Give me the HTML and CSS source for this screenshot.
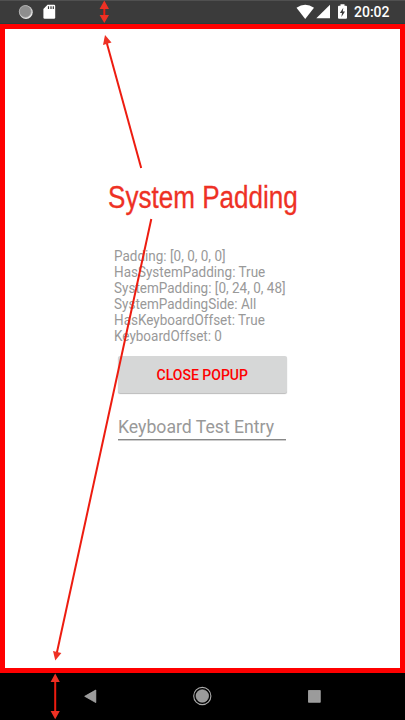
FILE: index.html
```
<!DOCTYPE html>
<html lang="en">
<head>
<meta charset="utf-8">
<title>System Padding</title>
<link rel="stylesheet" href="styles.css">
</head>
<body>
<div class="phone">
  <header class="status">
    <svg class="status-left" width="60" height="24" viewBox="0 0 60 24">
      <circle cx="26" cy="12.2" r="6.7" fill="#e8e8e8"/>
      <circle cx="25.3" cy="11.5" r="6" fill="#8e8e8e" stroke="#b5b5b5" stroke-width=".8"/>
      <path d="M47.5 4.8H54Q55.2 4.8 55.2 6V17.5Q55.2 18.8 54 18.8H44.7Q43.4 18.8 43.4 17.5V9Z" fill="#fff"/>
      <path d="M48.5 6.2V9M51 6.2V9M53.3 6.2V9" stroke="#3b3b3b" stroke-width="1.2"/>
    </svg>
    <svg class="status-right" width="55" height="24" viewBox="295 0 55 24">
      <path d="M296.5 7.8Q305.2 1.5 314 7.8L305.2 19Z" fill="#fff"/>
      <path d="M330 4.8V18.3H316.3Z" fill="#fff"/>
      <path d="M340.5 4.2H344.5V5.7H346Q347 5.7 347 6.7V17.8Q347 18.8 346 18.8H339Q338 18.8 338 17.8V6.7Q338 5.7 339 5.7H340.5Z" fill="#fff"/>
      <path d="M343.3 7.8L339.9 13H342L341.4 17L345 11.6H342.8Z" fill="#3b3b3b"/>
    </svg>
    <span class="clock">20:02</span>
  </header>
  <main class="popup">
    <h1 class="title"><span>System Padding</span></h1>
    <section class="content">
      <div class="info">
        <div>Padding: [0, 0, 0, 0]</div>
        <div>HasSystemPadding: True</div>
        <div>SystemPadding: [0, 24, 0, 48]</div>
        <div>SystemPaddingSide: All</div>
        <div>HasKeyboardOffset: True</div>
        <div>KeyboardOffset: 0</div>
      </div>
      <button class="close">CLOSE POPUP</button>
      <div class="entry"><span>Keyboard Test Entry</span></div>
    </section>
  </main>
  <nav class="navbar">
    <svg width="405" height="48" viewBox="0 672 405 48">
      <path d="M84.7 696.3L95.8 690V702.6Z" fill="#9b9b9b" stroke="#b5b5b5" stroke-width=".7"/>
      <circle cx="202.3" cy="696" r="8.6" fill="none" stroke="#aaa" stroke-width="1.1"/>
      <circle cx="202.3" cy="696" r="6.3" fill="#9b9b9b" stroke="#b0b0b0" stroke-width=".6"/>
      <path d="M308.5 690.5H320.3V702.3H308.5Z" fill="#9b9b9b" stroke="#b5b5b5" stroke-width=".7"/>
    </svg>
  </nav>
  <svg class="arrows" width="405" height="720" viewBox="0 0 405 720">
    <g class="shaft">
      <path d="M104.3 6V18"/>
      <path d="M141.2 168L106.8 43"/>
      <path d="M151.3 219L56.8 653"/>
      <path d="M55.2 680V713"/>
    </g>
    <g class="head">
      <path d="M104.3 .5L109 9H99.6ZM104.3 23L109 15H99.6Z"/>
      <path d="M105 35L111.5 42.6L103 45Z"/>
      <path d="M55.3 660.5L53 651L61.4 653Z"/>
      <path d="M55.2 673.5L59.8 682H50.6ZM55.2 719.2L59.8 711H50.6Z"/>
    </g>
  </svg>
</div>
</body>
</html>
```
FILE: styles.css
```
* { box-sizing: border-box; }
body { margin: 0; background: #fff; font-family: Roboto, sans-serif; }
.phone { position: relative; width: 405px; height: 720px; display: flex; flex-direction: column; overflow: hidden; }
.status { height: 24px; flex: none; background: #3b3b3b; display: flex; align-items: center; border-top: 1px solid #505050; border-bottom: 1px solid #273c3c; }
.status svg { flex: none; }
.status-right { margin-left: 235px; }
.clock { margin-left: 4px; color: #fff; font-size: 14px; font-weight: 500; line-height: 24px; }
.popup { height: 649px; flex: none; border: 5px solid #f00; display: flex; flex-direction: column; align-items: center; background: #fff; }
.title { margin: 149px 0 0; height: 40px; width: 190px; font: 31px/40px "Liberation Sans", sans-serif; color: #ee3124; white-space: nowrap; }
.title span { display: inline-block; transform: scaleX(.841); transform-origin: left; -webkit-text-stroke: .3px #ee3124; }
.content { width: 177px; margin-top: 30px; }
.info { height: 97px; font-size: 14px; line-height: 16.1px; color: #999; white-space: nowrap; transform: scaleX(.965); transform-origin: left; }
.close { display: block; width: 168.5px; height: 37px; margin: 11px 0 0 4px; padding: 1px 0 0; border: 0; border-radius: 2px; background: #d6d7d7; box-shadow: 0 1px 1px #bbb; color: #f00; font: 500 14px/37px Roboto, sans-serif; }
.entry { width: 168px; height: 28px; margin: 19px 0 0 4px; border-bottom: 1px solid #888; box-shadow: 0 1px #ccc; color: #999; font-size: 18px; line-height: 29px; white-space: nowrap; }
.entry span { display: inline-block; transform: scaleX(.98); transform-origin: left; }
.navbar { height: 47px; flex: none; background: #000; }
.navbar svg { display: block; margin-top: -1px; }
.arrows { position: absolute; left: 0; top: 0; }
.shaft { fill: none; stroke: #ed1c10; stroke-width: 2; }
.head { fill: #ee3124; }
```
